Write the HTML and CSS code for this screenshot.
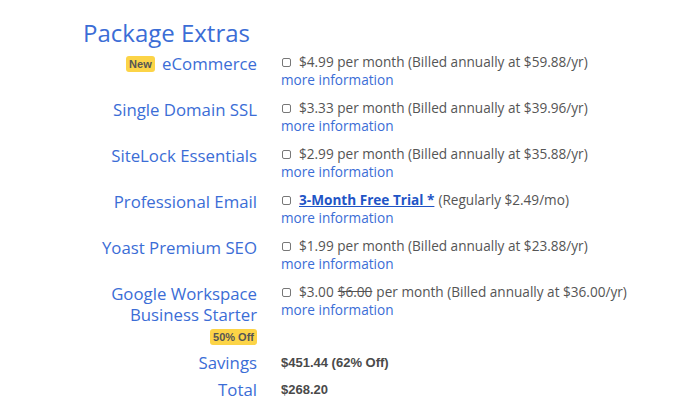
FILE: index.html
```html
<!DOCTYPE html>
<html>
<head>
<meta charset="utf-8">
<link rel="stylesheet" href="styles.css">
</head>
<body>
<div class="panel">
  <h2 class="title">Package Extras</h2>
  <div class="grid">
    <div class="label"><span class="badge">New</span> eCommerce</div>
    <div class="opt">
      <div class="line"><span class="box"></span>$4.99 per month (Billed annually at $59.88/yr)</div>
      <a class="more">more information</a>
    </div>

    <div class="label">Single Domain SSL</div>
    <div class="opt">
      <div class="line"><span class="box"></span>$3.33 per month (Billed annually at $39.96/yr)</div>
      <a class="more">more information</a>
    </div>

    <div class="label">SiteLock Essentials</div>
    <div class="opt">
      <div class="line"><span class="box"></span>$2.99 per month (Billed annually at $35.88/yr)</div>
      <a class="more">more information</a>
    </div>

    <div class="label">Professional Email</div>
    <div class="opt">
      <div class="line"><span class="box"></span><a class="trial">3-Month Free Trial *</a> (Regularly $2.49/mo)</div>
      <a class="more">more information</a>
    </div>

    <div class="label">Yoast Premium SEO</div>
    <div class="opt">
      <div class="line"><span class="box"></span>$1.99 per month (Billed annually at $23.88/yr)</div>
      <a class="more">more information</a>
    </div>

    <div class="label">Google Workspace<br>Business Starter<br><span class="badge off">50% Off</span></div>
    <div class="opt">
      <div class="line"><span class="box"></span>$3.00 <s>$6.00</s> per month (Billed annually at $36.00/yr)</div>
      <a class="more">more information</a>
    </div>
  </div>
  <div class="grid totals">
    <div class="label">Savings</div>
    <div class="val">$451.44 (62% Off)</div>

    <div class="label">Total</div>
    <div class="val">$268.20</div>
  </div>
</div>
</body>
</html>
```
FILE: styles.css
```css
html, body {
  margin: 0;
  padding: 0;
  background: #ffffff;
}
body {
  font-family: "Open Sans", "Liberation Sans", sans-serif;
}
.panel {
  padding: 17px 0 0 83px;
}
.title {
  margin: 0 0 4px 0;
  font-size: 24px;
  line-height: 32px;
  font-weight: 400;
  color: #3b6dd6;
}
.grid {
  display: grid;
  grid-template-columns: 174px 1fr;
  column-gap: 24px;
  row-gap: 10px;
}
.totals {
  margin-top: 6px;
  row-gap: 6px;
}
.label {
  text-align: right;
  font-size: 16.8px;
  line-height: 21px;
  color: #3b6dd6;
}
.badge {
  display: inline-block;
  background: #fcd447;
  color: #555;
  font-family: "Liberation Sans", Arial, sans-serif;
  font-weight: 700;
  font-size: 11px;
  line-height: 16px;
  padding: 0 3px;
  border-radius: 3px;
  vertical-align: 2px;
  margin-right: 3px;
}
.badge.off {
  margin: 4px 0 0 0;
  vertical-align: top;
}
.opt {
  font-size: 13.6px;
  line-height: 18px;
  color: #555;
}
.line {
  display: flex;
  align-items: center;
  white-space: nowrap;
}
.line s { margin: 0 4px; }
.box {
  width: 9px;
  height: 9px;
  border: 1px solid #777;
  border-radius: 2px;
  box-sizing: border-box;
  margin: 0 8px 0 1px;
  flex: none;
}
.trial {
  color: #1f55c6;
  font-weight: 700;
  text-decoration: underline;
  margin-right: 4px;
}
.more {
  display: block;
  color: #3b6dd6;
}
.val {
  font-family: "Liberation Sans", Arial, sans-serif;
  font-weight: 700;
  font-size: 13px;
  line-height: 21px;
  color: #4a4a4a;
}
```
